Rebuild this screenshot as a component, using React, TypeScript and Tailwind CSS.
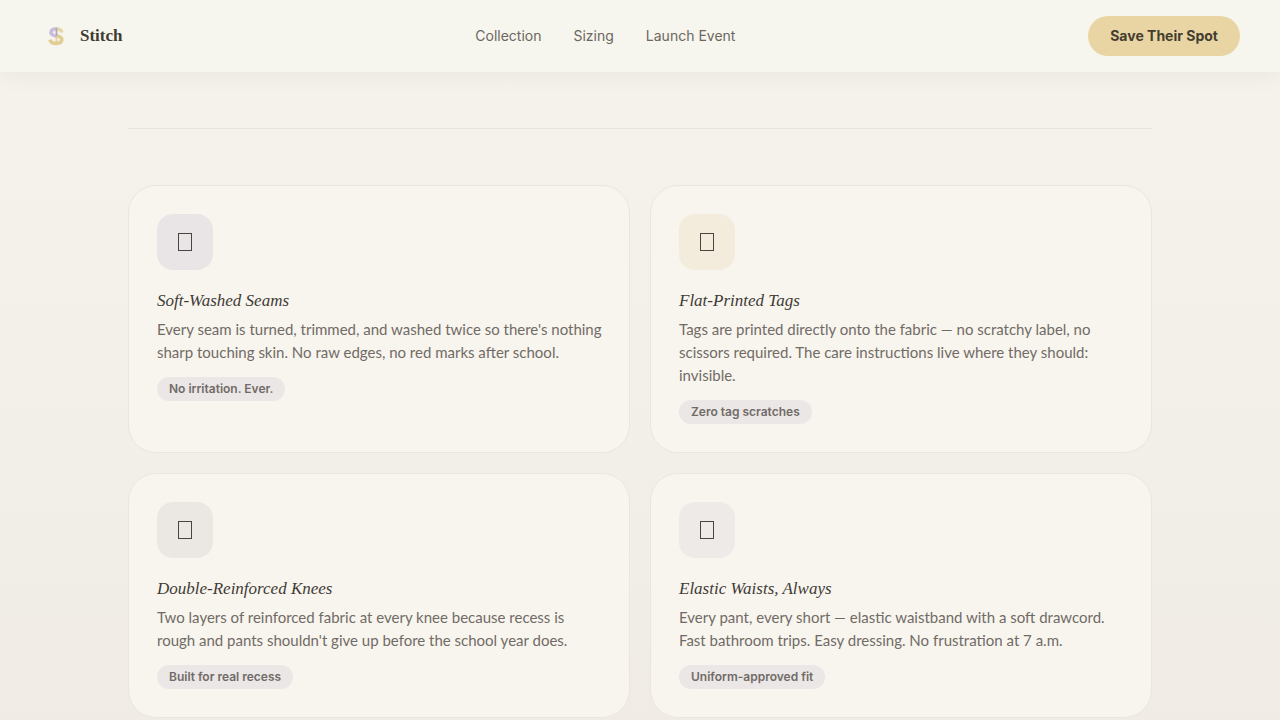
type Feature = {
  title: string;
  body: string;
  tag: string;
  tint: string;
};

const features: Feature[] = [
  {
    title: "Soft-Washed Seams",
    body: "Every seam is turned, trimmed, and washed twice so there's nothing sharp touching skin. No raw edges, no red marks after school.",
    tag: "No irritation. Ever.",
    tint: "bg-[#e9e5e6]",
  },
  {
    title: "Flat-Printed Tags",
    body: "Tags are printed directly onto the fabric — no scratchy label, no scissors required. The care instructions live where they should: invisible.",
    tag: "Zero tag scratches",
    tint: "bg-[#f3ecdc]",
  },
  {
    title: "Double-Reinforced Knees",
    body: "Two layers of reinforced fabric at every knee because recess is rough and pants shouldn't give up before the school year does.",
    tag: "Built for real recess",
    tint: "bg-[#ebe8e3]",
  },
  {
    title: "Elastic Waists, Always",
    body: "Every pant, every short — elastic waistband with a soft drawcord. Fast bathroom trips. Easy dressing. No frustration at 7 a.m.",
    tag: "Uniform-approved fit",
    tint: "bg-[#edeae8]",
  },
];

const links = ["Collection", "Sizing", "Launch Event"];

function Logo() {
  return (
    <svg viewBox="0 0 32 32" className="size-8" fill="none" aria-hidden="true">
      <g opacity="0.9">
        <path d="M16.5 7v18" stroke="#e3d19c" strokeWidth="2" />
        <path d="M21.8 12.5C21.4 10 19.4 9 16.5 9" stroke="#e6d59f" strokeWidth="3.4" />
        <path
          d="M10 19.6c.5 2.8 2.8 3.8 6.2 3.8 3.6 0 5.6-1.4 5.6-3.8 0-2.6-2.2-3.2-5.3-3.8"
          stroke="#dfca8b"
          strokeWidth="3.6"
        />
        <path
          d="M16.5 9c-3.3 0-5.5 1.1-5.5 3.5 0 2.1 1.7 2.8 5.5 3.5"
          stroke="#c3b7d8"
          strokeWidth="3.6"
        />
        <path d="M16.5 8v8" stroke="#a99bc9" strokeWidth="1.5" />
        <path d="M14.6 10.5v4" stroke="#efeaf0" strokeWidth="1" />
      </g>
    </svg>
  );
}

function FeatureCard({ title, body, tag, tint }: Feature) {
  return (
    <article className="flex flex-col items-start rounded-[28px] border border-[#e9e6e0] bg-[#f8f5ee] py-7 pr-6 pl-7">
      <div className={`flex size-14 items-center justify-center rounded-2xl ${tint}`}>
        <svg viewBox="0 0 14 18" className="h-[18px] w-[14px]" fill="none" aria-hidden="true">
          <rect x="0.5" y="0.5" width="13" height="17" stroke="#4a4440" />
        </svg>
      </div>
      <h3 className="mt-[19px] font-['Liberation_Serif',serif] text-[17px] leading-6 text-[#403b36] italic">
        {title}
      </h3>
      <p className="mt-[5px] font-['Lato',sans-serif] text-[15px] leading-[23px] text-[#716b66]">
        {body}
      </p>
      <span className="mt-[13px] rounded-full bg-[#ebe7e6] px-3 text-xs leading-6 font-semibold text-[#716b68]">
        {tag}
      </span>
    </article>
  );
}

export default function App() {
  return (
    <div className="min-h-screen bg-linear-to-b from-[#f6f3ec] via-[#f3f0ea] to-[#f0ebe5] font-['Inter',sans-serif]">
      <header className="sticky top-0 z-10 flex h-[72px] items-center justify-between bg-[#f7f6ee] px-10 shadow-[0_4px_20px_rgba(90,100,80,0.08)]">
        <a href="#top" className="flex items-center gap-2">
          <Logo />
          <span className="font-['Liberation_Serif',serif] text-[17px] font-bold text-[#403b33]">
            Stitch
          </span>
        </a>
        <nav className="flex gap-8">
          {links.map((link) => (
            <a key={link} href="#features" className="text-sm text-[#6c665f]">
              {link}
            </a>
          ))}
        </nav>
        <button
          type="button"
          className="h-10 rounded-full bg-[#e8d5a3] px-[22px] text-sm font-bold text-[#453c30]"
        >
          Save Their Spot
        </button>
      </header>
      <main id="features" className="mx-auto max-w-5xl pt-14">
        <hr className="border-[#e7e4dd]" />
        <section className="mt-14 grid grid-cols-2 gap-5">
          {features.map((feature) => (
            <FeatureCard key={feature.title} {...feature} />
          ))}
        </section>
      </main>
    </div>
  );
}
